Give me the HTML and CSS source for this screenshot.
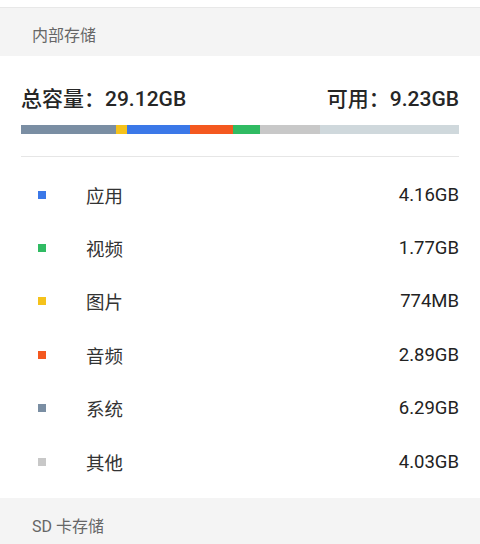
FILE: index.html
```html
<!DOCTYPE html>
<html lang="zh">
<head>
<meta charset="utf-8">
<link rel="stylesheet" href="styles.css">
</head>
<body>
<div class="page">
  <div class="section-head">内部存储</div>
  <div class="card">
    <div class="totals">
      <span>总容量：29.12GB</span>
      <span>可用：9.23GB</span>
    </div>
    <div class="bar">
      <span class="seg sys" style="width:95px"></span>
      <span class="seg pic" style="width:11px"></span>
      <span class="seg app" style="width:63px"></span>
      <span class="seg aud" style="width:43px"></span>
      <span class="seg vid" style="width:27px"></span>
      <span class="seg oth" style="width:60px"></span>
      <span class="seg free"></span>
    </div>
    <div class="sep"></div>
    <ul class="list">
      <li class="row"><span class="dot app"></span><span class="label">应用</span><span class="value">4.16GB</span></li>
      <li class="row"><span class="dot vid"></span><span class="label">视频</span><span class="value">1.77GB</span></li>
      <li class="row"><span class="dot pic"></span><span class="label">图片</span><span class="value">774MB</span></li>
      <li class="row"><span class="dot aud"></span><span class="label">音频</span><span class="value">2.89GB</span></li>
      <li class="row"><span class="dot sys"></span><span class="label">系统</span><span class="value">6.29GB</span></li>
      <li class="row"><span class="dot oth"></span><span class="label">其他</span><span class="value">4.03GB</span></li>
    </ul>
  </div>
  <div class="section-head bottom">SD 卡存储</div>
</div>
</body>
</html>
```

FILE: styles.css
```css
* { box-sizing: border-box; }
html, body { margin: 0; padding: 0; background: #fff; }
body {
  font-family: Roboto, "Noto Sans CJK SC", sans-serif;
  color: #222;
  width: 480px;
  height: 544px;
  overflow: hidden;
}
.page { display: flex; flex-direction: column; }
.section-head {
  margin-top: 7px;
  height: 49px;
  border-top: 1px solid #e8e8e8;
  background: #f4f4f4;
  color: #666;
  font-size: 16px;
  padding-left: 32px;
  padding-top: 3px;
  display: flex;
  align-items: center;
}
.section-head.bottom {
  margin-top: 0;
  border-top: none;
  height: 48px;
  padding-top: 6px;
  align-items: center;
}
.card { padding: 0 21px; }
.totals {
  margin-top: 29px;
  height: 28px;
  line-height: 28px;
  display: flex;
  justify-content: space-between;
  font-size: 21px;
  font-weight: 500;
  color: #262626;
}
.bar {
  margin-top: 12px;
  height: 9px;
  display: flex;
}
.seg { display: block; height: 100%; }
.seg.free { flex: 1; background: #cfd8dc; }
.sys { background: #7a8ea3; }
.pic { background: #f5c21b; }
.app { background: #3b78e8; }
.aud { background: #f4581f; }
.vid { background: #30bb63; }
.oth { background: #c8c8c8; }
.sep {
  margin-top: 22px;
  height: 1px;
  background: #e6e6e6;
}
.list {
  list-style: none;
  margin: 0;
  padding: 11px 0 10px;
}
.row {
  height: 53.4px;
  display: flex;
  align-items: center;
  padding-left: 17px;
}
.dot {
  width: 8px;
  height: 8px;
  margin-right: 40px;
  flex: none;
}
.label {
  flex: 1;
  font-size: 18.5px;
  color: #333;
}
.value {
  font-size: 18.5px;
  color: #222;
}
```
